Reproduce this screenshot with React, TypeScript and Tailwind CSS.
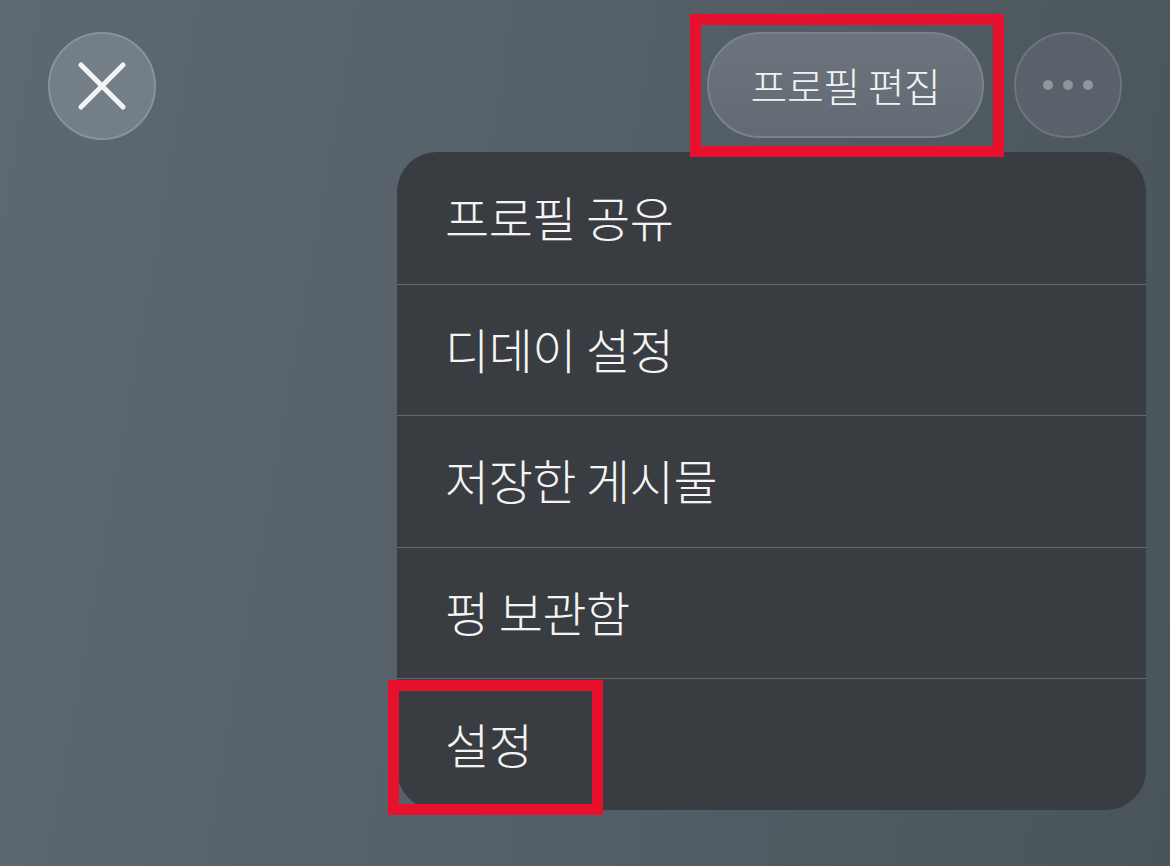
import React from "react";

const MENU_ITEMS = ["프로필 공유", "디데이 설정", "저장한 게시물", "펑 보관함", "설정"];

const font = { fontFamily: '"Noto Sans CJK KR", "Noto Sans", sans-serif' };

export default function App() {
  return (
    <div
      className="relative h-[866px] w-[1170px] overflow-hidden bg-[linear-gradient(100deg,#5e6870_0%,#566068_45%,#4a545b_100%)]"
      style={font}
    >
      {/* top bar */}
      <div className="flex items-start justify-between px-12 pt-8">
        <button className="flex h-[108px] w-[108px] items-center justify-center rounded-full border-2 border-[#8a939a] bg-[#747e86]">
          <svg width="48" height="48" viewBox="0 0 48 48" fill="none">
            <path d="M3 3 L45 45 M45 3 L3 45" stroke="#f3f3f3" strokeWidth="5" strokeLinecap="round" />
          </svg>
        </button>

        <div className="flex items-start gap-[30px]">
          <div className="relative h-[106px] w-[277px]">
            <button className="flex h-[106px] w-[277px] items-center justify-center rounded-full border-2 border-[#7a838a] bg-[linear-gradient(180deg,#6c757d,#626b73)] text-[40px] font-light tracking-[-0.5px] text-[#f2f2f2]">
              프로필 편집
            </button>
            <span className="pointer-events-none absolute -left-[17px] -top-[18px] z-20 block h-[143px] w-[314px] border-[11px] border-[#e8112d]" />
          </div>
          <button className="flex h-[106px] w-[108px] items-center justify-center gap-[10px] rounded-full border-2 border-[#6c757c] bg-[#59626a]">
            <span className="h-[10px] w-[10px] rounded-full bg-[#8e959b]" />
            <span className="h-[10px] w-[10px] rounded-full bg-[#8e959b]" />
            <span className="h-[10px] w-[10px] rounded-full bg-[#8e959b]" />
          </button>
        </div>
      </div>

      {/* dropdown menu */}
      <div className="absolute left-[397px] top-[152px] z-10 flex w-[749px] flex-col overflow-hidden rounded-[40px] bg-[#393c40]">
        {MENU_ITEMS.map((item, i) => (
          <div
            key={item}
            className={
              "flex h-[131.6px] items-center pb-1 pl-12 text-[48px] font-light tracking-[-0.5px] text-[#f4f4f4] " +
              (i > 0 ? "border-t border-[#64686b]" : "")
            }
          >
            {item}
          </div>
        ))}
      </div>

      {/* highlight on 설정 */}
      <span className="pointer-events-none absolute left-[388px] top-[680px] z-20 h-[135px] w-[215px] border-[11px] border-[#e8112d]" />
    </div>
  );
}
